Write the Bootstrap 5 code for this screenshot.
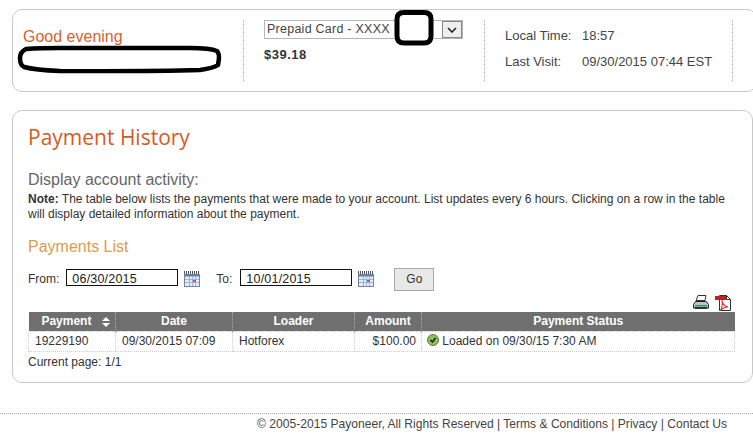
<!DOCTYPE html>
<html lang="en">
<head>
    <meta charset="UTF-8">
    <meta name="viewport" content="width=device-width, initial-scale=1.0">
    <title>Payment History</title>
    <link href="https://cdn.jsdelivr.net/npm/bootstrap@5.3.0/dist/css/bootstrap.min.css" rel="stylesheet">
    <style>
        html, body { overflow: hidden; }
        body { font-family: "Liberation Sans", Arial, sans-serif; font-size: 12px; color: #333; background: #fff; height: 436px; }
        .page-wrap { padding: 9px 0 0 12px; width: 753px; }
        .summary-box { height: 83px; width: 745px; border: 1px solid #c8c8c8; border-radius: 10px; padding: 10px 0 10px 0; }
        .summary-greet { width: 231px; padding: 7px 0 0 10px; border-right: 1px dotted #aaa; position: relative; }
        .greet-text { font-size: 16px; color: #d9622b; line-height: 20px; }
        .summary-card { width: 241px; padding: 0 0 0 20px; border-right: 1px dotted #aaa; position: relative; }
        .card-select { width: 199px; height: 19px; border: 1px solid #b5b5b5; font-size: 12.5px; line-height: 16px; padding-left: 2px; color: #444; letter-spacing: .25px; position: relative; white-space: nowrap; }
        .select-arrow { position: absolute; right: 0; top: 0; width: 20px; height: 17px; background: #eee; border: 1px solid #888; }
        .balance { font-size: 13px; font-weight: 700; margin-top: 6px; color: #333; letter-spacing: .5px; }
        .summary-time { width: 248px; padding: 6px 0 0 20px; border-right: 1px dotted #aaa; color: #444; font-size: 13px; }
        .time-row { height: 26px; }
        .time-label { width: 77px; }
        .history-box { margin-top: 18px; height: 273px; width: 741px; border: 1px solid #c8c8c8; border-radius: 10px; padding: 12px 16px 0 15px; }
        .history-title { font-family: "Open Sans", "Liberation Sans", sans-serif; font-size: 21px; line-height: 28px; color: #d9591f; margin: 0; }
        .sub-title { font-size: 16px; color: #666; line-height: 18px; margin-top: 20px; }
        .note-text { font-size: 12px; line-height: 15px; color: #333; width: 700px; margin: 3px 0 0; }
        .list-title { font-size: 16px; color: #e19a4c; line-height: 20px; margin-top: 15px; }
        .filter-row { margin-top: 11px; height: 22px; color: #333; }
        .date-field { width: 112px; height: 17px; border: 1px solid #111; font-size: 12.5px; line-height: 18px; padding-left: 5px; color: #222; letter-spacing: .2px; margin: 0 0 3px 7px; }
        .to-label { margin-left: 16px; margin-right: 1px; }
        .cal-icon { margin-left: 6px; }
        .go-btn { width: 40px; height: 23px; background: #e8e8e8; border: 1px solid #aaa; font-size: 12px; line-height: 21px; text-align: center; color: #333; margin-left: 20px; }
        .export-row { height: 19px; margin-top: 3px; padding-right: 5px; gap: 6px; }
        .pay-table { width: 707px; margin: 0; table-layout: fixed; border-collapse: collapse; font-size: 12px; }
        .pay-table th { background: #6f6f6f; color: #fff; text-align: center; height: 19px; padding: 0; font-weight: 700; border-right: 1px dotted #aaa; line-height: 18px; }
        .pay-table th.sort-head { padding-left: 8px; }
        .pay-table td { height: 20px; padding: 0 5px 0 6px; border: 1px dotted #ccc; color: #333; line-height: 18px; white-space: nowrap; }
        .pay-table td.status-cell { padding-left: 5px; }
        .sort-icon { margin-left: 4px; }
        .page-note { margin-top: 1px; color: #333; }
        .foot-bar { margin-top: 30px; height: 23px; border-top: 1px dotted #aaa; text-align: right; padding: 1px 26px 0 0; font-size: 12.08px; color: #444; }
        .scribble { position: absolute; left: 0; top: 0; pointer-events: none; }
    </style>
</head>
<body>
    <div class="page-wrap">
        <div class="summary-box d-flex">
            <div class="summary-greet">
                <div class="greet-text">Good evening</div>
            </div>
            <div class="summary-card">
                <div class="card-select">Prepaid Card - XXXX
                    <span class="select-arrow d-flex align-items-center justify-content-center">
                        <svg width="10" height="6" viewBox="0 0 10 6"><path d="M1 1l4 4 4-4" fill="none" stroke="#222" stroke-width="1.6"/></svg>
                    </span>
                </div>
                <div class="balance">$39.18</div>
            </div>
            <div class="summary-time">
                <div class="d-flex time-row"><span class="time-label">Local Time:</span><span>18:57</span></div>
                <div class="d-flex time-row"><span class="time-label">Last Visit:</span><span>09/30/2015 07:44 EST</span></div>
            </div>
        </div>

        <div class="history-box">
            <h1 class="history-title">Payment History</h1>
            <div class="sub-title">Display account activity:</div>
            <p class="note-text"><b>Note:</b> <span>The table below lists the payments that were made to your account. List updates every 6 hours. Clicking on a row in the table</span><br><span>will display detailed information about the payment.</span></p>
            <div class="list-title">Payments List</div>
            <div class="filter-row d-flex align-items-center">
                <span>From:</span>
                <div class="date-field">06/30/2015</div>
                <svg class="cal-icon" width="16" height="16" viewBox="0 0 16 16"><rect x=".5" y="3.500" width="15" height="12" fill="#e4ecf8" stroke="#6f86a8"/><path d="M0 1.500h16" stroke="#555" stroke-width="3" stroke-dasharray="1 1"/><path d="M1 4.500h14" stroke="#5f7fb0" stroke-width="2"/><path d="M1 8.500h14M1 11.500h14M5.500 5v10M8.500 5v10M11.500 5v10" stroke="#9db4d6"/><rect x="9" y="9" width="3" height="2" fill="#d9534f"/></svg>
                <span class="to-label">To:</span>
                <div class="date-field">10/01/2015</div>
                <svg class="cal-icon" width="16" height="16" viewBox="0 0 16 16"><rect x=".5" y="3.500" width="15" height="12" fill="#e4ecf8" stroke="#6f86a8"/><path d="M0 1.500h16" stroke="#555" stroke-width="3" stroke-dasharray="1 1"/><path d="M1 4.500h14" stroke="#5f7fb0" stroke-width="2"/><path d="M1 8.500h14M1 11.500h14M5.500 5v10M8.500 5v10M11.500 5v10" stroke="#9db4d6"/><rect x="9" y="9" width="3" height="2" fill="#d9534f"/></svg>
                <div class="go-btn">Go</div>
            </div>
            <div class="export-row d-flex justify-content-end align-items-center">
                <svg width="16" height="15" viewBox="0 0 16 15"><path d="M5 .5h8l-1 5H3z" fill="#fff" stroke="#333"/><path d="M2.500 6.500h11l2 3v3.500H.5V9.500z" fill="#b9c4cf" stroke="#222"/><rect x="2" y="10" width="12" height="1.500" fill="#2f9e4f"/><rect x="2" y="12" width="12" height="2" fill="#333"/></svg>
                <svg width="16" height="16" viewBox="0 0 16 16"><path d="M4.500.5h7l4 4v11h-11z" fill="#fff" stroke="#333"/><path d="M11.500.5v4h4" fill="none" stroke="#333"/><rect x="0" y="1" width="11" height="4" fill="#c81e1e"/><path d="M7 5c0 4 2 6 6 7-4 0-5 1-7 3 1-3 2-6 1-10z" fill="none" stroke="#d33" stroke-width="1.200"/></svg>
            </div>
            <table class="pay-table">
                <colgroup><col style="width:87px"><col style="width:117px"><col style="width:122px"><col style="width:67px"><col></colgroup>
                <thead>
                    <tr>
                        <th class="sort-head">Payment&nbsp;
                            <svg class="sort-icon" width="8" height="10" viewBox="0 0 8 10"><path d="M4 0l4 4H0zM4 10l4-4H0z" fill="#fff"/></svg>
                        </th>
                        <th>Date</th>
                        <th>Loader</th>
                        <th>Amount</th>
                        <th class="border-0">Payment Status</th>
                    </tr>
                </thead>
                <tbody>
                    <tr>
                        <td>19229190</td>
                        <td>09/30/2015 07:09</td>
                        <td>Hotforex</td>
                        <td class="text-end">$100.00</td>
                        <td class="status-cell">
                            <svg width="12" height="12" viewBox="0 0 12 12" class="align-text-top"><circle cx="6" cy="6" r="5.500" fill="#8cbf5a" stroke="#5a7d3c"/><path d="M3.500 6l2 2 3-4" fill="none" stroke="#111" stroke-width="1.400"/></svg>
                            Loaded on 09/30/15 7:30 AM
                        </td>
                    </tr>
                </tbody>
            </table>
            <div class="page-note">Current page: 1/1</div>
        </div>
    </div>

    <div class="foot-bar">&copy; 2005-2015 Payoneer, All Rights Reserved | Terms &amp; Conditions | Privacy | Contact Us</div>

    <!-- marker blots drawn over the screenshot -->
    <svg class="scribble" width="753" height="436" viewBox="0 0 753 436">
        <path d="M26 49Q40 48 60 48H190Q210 48 217 51Q219 53 219 58L218 65Q214 68 200 70Q150 71.500 60 71Q35 70 24 67Q20 65 20 58Q20 52 26 49Z" fill="#fff" stroke="#000" stroke-width="4.500"/>
        <path d="M404 12.500H424Q431 12.500 431 19V36Q431 43 424 43H404Q397 43 397 36V19Q397 12.500 404 12.500Z" fill="#fff" stroke="#000" stroke-width="5"/>
    </svg>
</body>
</html>
